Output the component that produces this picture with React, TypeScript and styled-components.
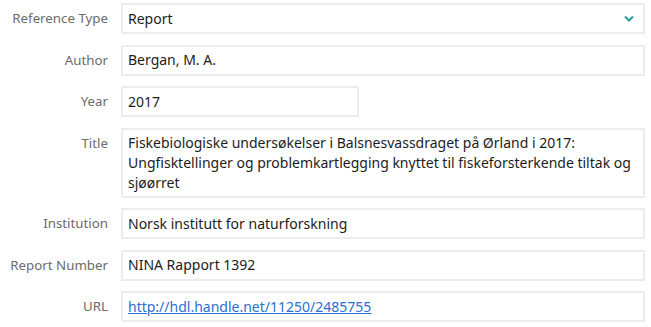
import styled, { createGlobalStyle } from 'styled-components';

const GlobalStyle = createGlobalStyle`
  html, body {
    margin: 0;
    padding: 0;
    background: #ffffff;
  }
  body {
    font-family: 'Noto Sans', 'Open Sans', sans-serif;
  }
`;

type Field = {
  label: string;
  value: string;
  kind?: 'select' | 'link' | 'multi' | 'short';
};

const fields: Field[] = [
  { label: 'Reference Type', value: 'Report', kind: 'select' },
  { label: 'Author', value: 'Bergan, M. A.' },
  { label: 'Year', value: '2017', kind: 'short' },
  {
    label: 'Title',
    value:
      'Fiskebiologiske undersøkelser i Balsnesvassdraget på Ørland i 2017: Ungfisktellinger og problemkartlegging knyttet til fiskeforsterkende tiltak og sjøørret',
    kind: 'multi',
  },
  { label: 'Institution', value: 'Norsk institutt for naturforskning' },
  { label: 'Report Number', value: 'NINA Rapport 1392' },
  { label: 'URL', value: 'http://hdl.handle.net/11250/2485755', kind: 'link' },
];

export default function App() {
  return (
    <>
      <GlobalStyle />
      <Form>
        {fields.map((field) => (
          <Row key={field.label}>
            <Label>{field.label}</Label>
            <Box $short={field.kind === 'short'} $multi={field.kind === 'multi'}>
              {field.kind === 'link' ? (
                <Link href="#">{field.value}</Link>
              ) : (
                <Value>{field.value}</Value>
              )}
              {field.kind === 'select' && (
                <Chevron width="10" height="7" viewBox="0 0 10 7">
                  <path d="M1 1.5 L5 5.5 L9 1.5" fill="none" stroke="#2a9a9c" strokeWidth="2" />
                </Chevron>
              )}
            </Box>
          </Row>
        ))}
      </Form>
    </>
  );
}

const Form = styled.div`
  display: flex;
  flex-direction: column;
  gap: 10.5px;
  padding: 3px 6px 0 0;
`;

const Row = styled.div`
  display: grid;
  grid-template-columns: 108px 1fr;
  column-gap: 13px;
  align-items: start;
`;

const Label = styled.div`
  text-align: right;
  color: #6b6b6b;
  font-size: 13.3px;
  line-height: 20px;
  padding-top: 5px;
  white-space: nowrap;
`;

type BoxProps = {
  $short?: boolean;
  $multi?: boolean;
};
const Box = styled.div<BoxProps>`
  box-sizing: border-box;
  display: flex;
  align-items: ${({ $multi }) => ($multi ? 'flex-start' : 'center')};
  justify-content: space-between;
  width: ${({ $short }) => ($short ? '238px' : '100%')};
  min-height: 31px;
  padding: 3px 7px 3px 5px;
  border: 2px solid #ececec;
  background: #ffffff;
`;

const Value = styled.span`
  color: #1c1c1c;
  font-size: 14px;
  line-height: 20px;
`;

const Link = styled.a`
  color: #2a6fd4;
  font-size: 14px;
  line-height: 20px;
  text-decoration: underline;
`;

const Chevron = styled.svg`
  flex: none;
  margin-right: 2px;
`;
